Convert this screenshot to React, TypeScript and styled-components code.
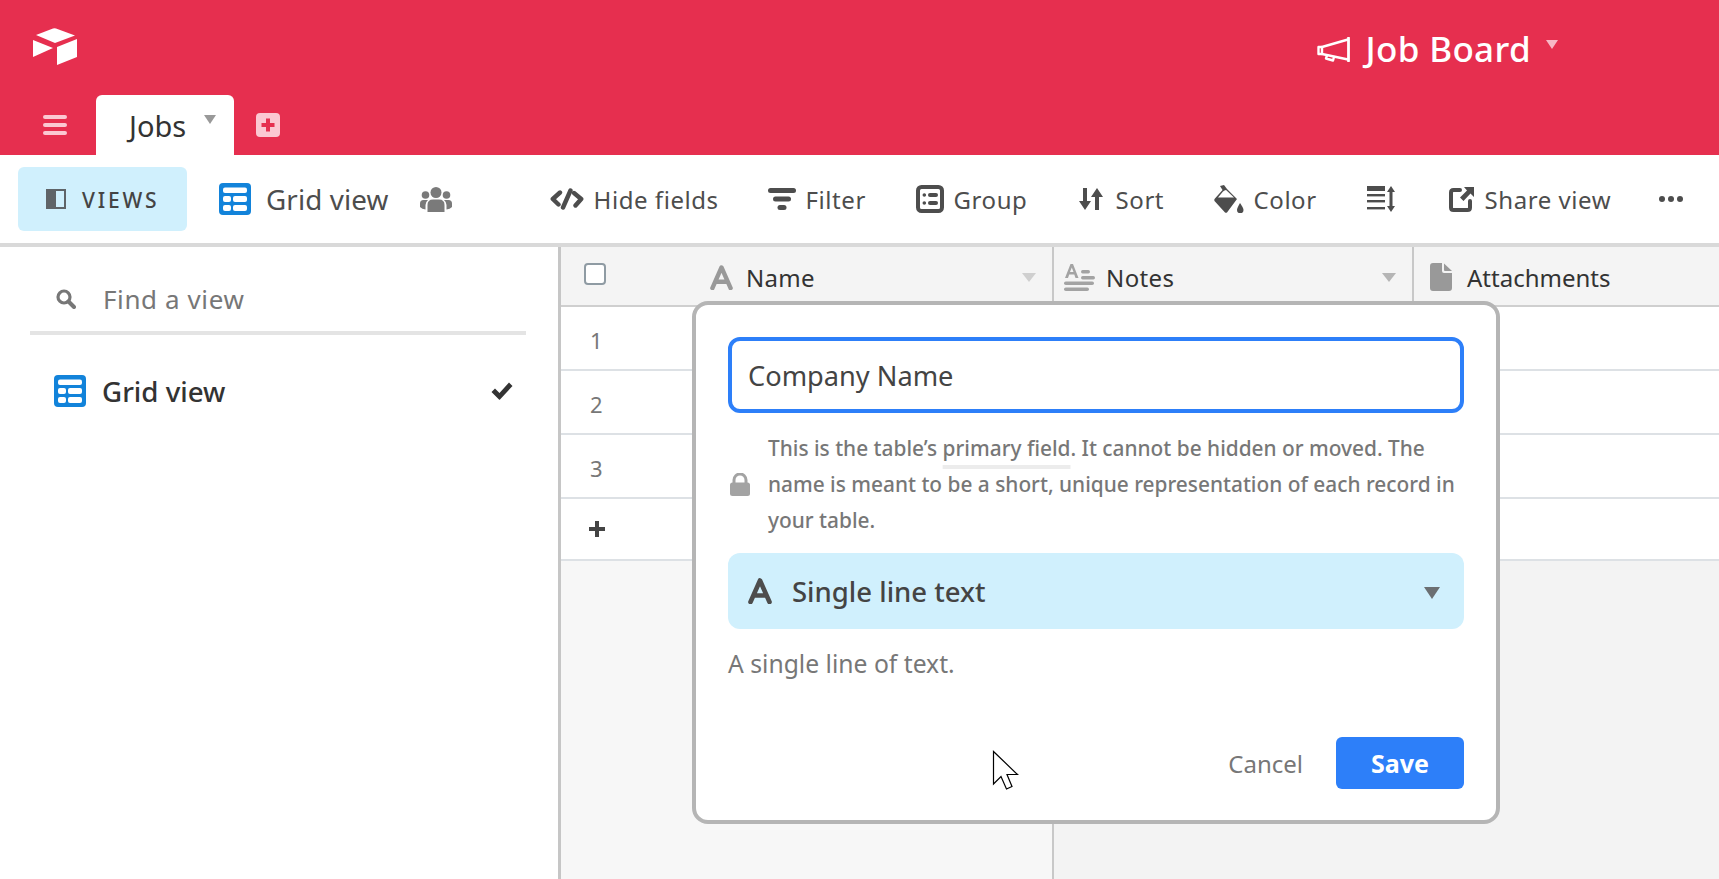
import React from "react";
import styled, { createGlobalStyle } from "styled-components";

const Global = createGlobalStyle`
  html, body { margin: 0; padding: 0; background: #fff; overflow: hidden; }
  * { box-sizing: border-box; }
  body { font-family: "Noto Sans", "Open Sans", Arial, sans-serif; }
`;

const Page = styled.div`
  position: relative;
  width: 1719px;
  height: 879px;
  display: flex;
  flex-direction: column;
  overflow: hidden;
`;
const Header = styled.header`
  height: 155px;
  flex: none;
  background: #e62f4f;
  display: flex;
  flex-direction: column;
`;
const TopRow = styled.div`
  height: 95px;
  display: flex;
  align-items: center;
  justify-content: space-between;
  padding: 0 161px 0 33px;
`;
const Logo = styled.svg`
  width: 44px;
  height: 37px;
  margin-top: -2px;
`;
const BaseTitle = styled.div`
  display: flex;
  align-items: center;
  color: #fff;
  margin-top: 3px;
`;
const BaseName = styled.span`
  font-size: 35px;
  font-weight: 500;
  line-height: 44px;
  margin: 0 15px;
  letter-spacing: 0.35px;
`;
const Caret = styled.span<{ $color: string; $w: number; $h: number }>`
  display: block;
  flex: none;
  width: 0;
  height: 0;
  border-left: ${(p) => p.$w / 2}px solid transparent;
  border-right: ${(p) => p.$w / 2}px solid transparent;
  border-top: ${(p) => p.$h}px solid ${(p) => p.$color};
`;
const BaseCaret = styled(Caret)`
  margin-top: -10px;
`;
const TabRow = styled.div`
  height: 60px;
  display: flex;
  align-items: flex-end;
  padding-left: 43px;
`;
const Burger = styled.svg`
  width: 24px;
  height: 20px;
  margin: 0 29px 20px 0;
`;
const Tab = styled.div`
  width: 138px;
  height: 60px;
  background: #fff;
  border-radius: 6px 6px 0 0;
  display: flex;
  align-items: center;
  padding: 2px 0 0 33px;
  color: #333;
  font-size: 29px;
  line-height: 40px;
`;
const TabCaret = styled(Caret)`
  margin: -13px 0 0 18px;
`;
const AddTab = styled.svg`
  width: 24px;
  height: 24px;
  margin: 0 0 18px 22px;
`;

const Toolbar = styled.div`
  height: 88px;
  flex: none;
  display: flex;
  align-items: center;
  padding-left: 18px;
  color: #4d4d4d;
  font-size: 24px;
  letter-spacing: 0.55px;
`;
const ViewsButton = styled.div`
  width: 169px;
  height: 64px;
  background: #d0f0fd;
  border-radius: 6px;
  display: flex;
  align-items: center;
  padding-left: 28px;
  margin-right: 32px;
  color: #444;
  font-size: 21px;
  letter-spacing: 2.8px;
  font-weight: 500;
`;
const ViewsLabel = styled.span`
  margin: 1px 0 0 16px;
`;
const ViewName = styled.div`
  width: 331px;
  display: flex;
  align-items: center;
  font-size: 27.8px;
  letter-spacing: 0.1px;
`;
const ViewNameText = styled.span`
  margin: 0 32px 0 15px;
`;
const ToolItem = styled.div<{ $w: number }>`
  width: ${(p) => p.$w}px;
  flex: none;
  display: flex;
  align-items: center;
  gap: 9.6px;
  white-space: nowrap;
`;
const Rule = styled.div`
  height: 4px;
  flex: none;
  background: #d9d9d9;
`;
const Main = styled.div`
  flex: 1;
  display: flex;
  min-height: 0;
`;
const Sidebar = styled.aside`
  width: 561px;
  flex: none;
  border-right: 3px solid #c6c6c6;
  padding: 30px 45px 0 30px;
`;
const SearchRow = styled.div`
  height: 58px;
  display: flex;
  align-items: center;
  gap: 27px;
  padding: 0 0 10px 26px;
  border-bottom: 4px solid #e4e4e4;
  width: 496px;
  color: #777;
  font-size: 26px;
  letter-spacing: 0.6px;
`;
const ViewItem = styled.div`
  margin-top: 40px;
  display: flex;
  align-items: center;
  padding-left: 24px;
  color: #333;
  font-size: 27.7px;
  font-weight: 500;
  height: 32px;
`;
const ViewItemName = styled.span`
  margin-left: 16px;
  flex: 1;
`;
const Grid = styled.section`
  flex: 1;
  min-width: 0;
  display: flex;
  flex-direction: column;
  background: #fff;
`;
const GridHeader = styled.div`
  height: 60px;
  flex: none;
  display: flex;
  background: #f4f4f4;
  border-bottom: 2px solid #cfcfcf;
  color: #333;
  font-size: 24px;
`;
const CheckCell = styled.div`
  width: 130px;
  display: flex;
  align-items: center;
  padding: 0 0 4px 23px;
  flex: none;
`;
const CheckBox = styled.span`
  width: 22px;
  height: 22px;
  border: 2px solid #8f9ba3;
  border-radius: 4px;
  background: #fff;
  display: block;
`;
const Column = styled.div<{ $w?: number; $left: number; $gap: number }>`
  ${(p) => (p.$w ? `width: ${p.$w}px; flex: none; border-right: 2px solid #c8c8c8;` : "flex: 1;")}
  display: flex;
  align-items: center;
  padding: 2px 16px 0 ${(p) => p.$left}px;
  gap: ${(p) => p.$gap}px;
`;
const ColumnName = styled.span<{ $spacing: number }>`
  flex: 1;
  letter-spacing: ${(p) => p.$spacing}px;
`;
const Row = styled.div<{ $h: number }>`
  height: ${(p) => p.$h}px;
  flex: none;
  display: flex;
  align-items: center;
  padding: 4px 0 0 29px;
  border-bottom: 2px solid #dde1e5;
  color: #777;
  font-size: 22px;
`;
const AddRowIcon = styled.svg`
  width: 16px;
  height: 16px;
  margin: -4px 0 0 -1px;
`;
const Filler = styled.div`
  flex: 1;
  display: flex;
`;
const FillerLeft = styled.div`
  width: 493px;
  flex: none;
  background: #f7f7f7;
  border-right: 2px solid #c8c8c8;
`;
const FillerRight = styled.div`
  flex: 1;
  background: #f3f3f3;
`;

const Popup = styled.div`
  position: absolute;
  left: 692px;
  top: 301px;
  width: 808px;
  height: 523px;
  background: #fff;
  border: 4px solid #b5b5b5;
  border-radius: 16px;
  padding: 32px 32px 31px;
  display: flex;
  flex-direction: column;
`;
const NameInput = styled.div`
  height: 76px;
  flex: none;
  border: 4px solid #2d7ff9;
  border-radius: 12px;
  display: flex;
  align-items: center;
  padding: 1px 0 0 16px;
  color: #444;
  font-size: 27.2px;
`;
const Notice = styled.div`
  margin-top: 17px;
  display: flex;
  align-items: center;
  gap: 18px;
  padding-left: 2px;
`;
const NoticeText = styled.p`
  margin: 0;
  width: 695px;
  color: #777;
  font-size: 20.85px;
  font-weight: 500;
  line-height: 36px;
  height: 108px;
`;
const Underlined = styled.span`
  text-decoration: underline 4px #ececec;
  text-underline-offset: 9px;
  text-decoration-skip-ink: none;
`;
const TypeSelect = styled.div`
  margin-top: 15px;
  height: 76px;
  flex: none;
  background: #d0f0fd;
  border-radius: 12px;
  display: flex;
  align-items: center;
  padding: 0 24px 0 20px;
  color: #444;
  font-size: 27.5px;
  font-weight: 500;
`;
const TypeName = styled.span`
  flex: 1;
  margin-left: 20px;
`;
const TypeCaret = styled(Caret)`
  margin-top: 4px;
`;
const Help = styled.p`
  margin: 17px 0 0;
  color: #777;
  font-size: 24.7px;
  line-height: 36px;
`;
const Footer = styled.div`
  margin-top: auto;
  display: flex;
  justify-content: flex-end;
  align-items: center;
`;
const CancelButton = styled.span`
  color: #777;
  font-size: 24px;
  margin-right: 33px;
`;
const SaveButton = styled.span`
  width: 128px;
  height: 52px;
  background: #2d7ff9;
  border-radius: 6px;
  color: #fff;
  font-size: 25px;
  font-weight: 700;
  display: flex;
  align-items: center;
  justify-content: center;
`;
const Cursor = styled.svg`
  position: absolute;
  left: 992px;
  top: 750px;
  width: 27px;
  height: 41px;
`;

const GridIcon = ({ size = 32 }: { size?: number }) => (
  <svg width={size} height={size} viewBox="0 0 32 32">
    <rect width="32" height="32" rx="4" fill="#1283da" />
    <g fill="#fff">
      <rect x="4" y="4.5" width="24" height="5.5" rx="2" />
      <rect x="4" y="13" width="8" height="6" rx="2" />
      <rect x="14" y="13" width="14" height="6" rx="2" />
      <rect x="4" y="22" width="8" height="6" rx="2" />
      <rect x="14" y="22" width="14" height="6" rx="2" />
    </g>
  </svg>
);

const AIcon = ({ color, w, h }: { color: string; w: number; h: number }) => (
  <svg width={w} height={h} viewBox="0 0 24 26" style={{ flex: "none" }}>
    <path d="M2.5 24 L12 2.5 L21.5 24 M6.5 17.5 H17.5" fill="none" stroke={color} strokeWidth="4.6" strokeLinecap="round" strokeLinejoin="round" />
  </svg>
);

export default function App() {
  return (
    <Page>
      <Global />
      <Header>
        <TopRow>
          <Logo viewBox="0 0 44 37">
            <g fill="#fff">
              <path d="M3 7 L20 0.5 Q21.5 0 23 0.5 L42 7.5 L22 15 Z" />
              <path d="M0 12 L20 20 L0 29 Z" />
              <path d="M24 19 L44 11 V29 L24 37 Z" />
            </g>
          </Logo>
          <BaseTitle>
            <svg width="33" height="25" viewBox="0 0 33 25" fill="none" stroke="#fff" strokeWidth="2.4" strokeLinejoin="round">
              <path d="M31.5 1 V24" strokeWidth="2.8" strokeLinecap="round" />
              <path d="M31 2.5 L5 10 V17 L31 22.5" />
              <path d="M5 10 H1.5 V17 H5" />
              <path d="M10 18.5 L9 21.5 L16 23.5 L17 20" />
            </svg>
            <BaseName>Job Board</BaseName>
            <BaseCaret $color="#f7b8c5" $w={13} $h={9} />
          </BaseTitle>
        </TopRow>
        <TabRow>
          <Burger viewBox="0 0 24 20">
            <g fill="#fbc8d2">
              <rect y="0" width="24" height="4" rx="2" />
              <rect y="8" width="24" height="4" rx="2" />
              <rect y="16" width="24" height="4" rx="2" />
            </g>
          </Burger>
          <Tab>
            Jobs
            <TabCaret $color="#999" $w={13} $h={9} />
          </Tab>
          <AddTab viewBox="0 0 24 24">
            <rect width="24" height="24" rx="4" fill="#fbc8d2" />
            <path d="M12 5.5 V18.5 M5.5 12 H18.5" stroke="#e62f4f" strokeWidth="4" />
          </AddTab>
        </TabRow>
      </Header>

      <Toolbar>
        <ViewsButton>
          <svg width="20" height="20" viewBox="0 0 20 20">
            <rect x="0" y="0" width="20" height="20" fill="#5f6468" />
            <rect x="10" y="2" width="8" height="16" fill="#d0f0fd" />
          </svg>
          <ViewsLabel>VIEWS</ViewsLabel>
        </ViewsButton>
        <ViewName>
          <GridIcon />
          <ViewNameText>Grid view</ViewNameText>
          <svg width="32" height="25" viewBox="0 0 32 25" fill="#7a7a7a">
            <circle cx="16" cy="5.5" r="5.5" />
            <circle cx="5.5" cy="8" r="3.8" />
            <circle cx="26.5" cy="8" r="3.8" />
            <path d="M7.5 25 V18 Q7.5 12.5 13 12.5 H19 Q24.5 12.5 24.5 18 V25 Q16 26 7.5 25 Z" />
            <path d="M0 20 V16.5 Q0 13 3.5 13 H8 Q5.5 15 5.5 18 V22.5 Q2 22 0 20 Z" />
            <path d="M32 20 V16.5 Q32 13 28.5 13 H24 Q26.5 15 26.5 18 V22.5 Q30 22 32 20 Z" />
          </svg>
        </ViewName>
        <ToolItem $w={218}>
          <svg width="34" height="22" viewBox="0 0 34 22" fill="none" stroke="#4d4d4d" strokeWidth="4.4" strokeLinecap="round" strokeLinejoin="round">
            <path d="M10 4.5 L2.8 11 L8.5 16.5" />
            <path d="M24 5 L31.2 11 L25.5 17.5" />
            <path d="M20.5 2.5 L13 19.5" />
          </svg>
          Hide fields
        </ToolItem>
        <ToolItem $w={148}>
          <svg width="28" height="22" viewBox="0 0 28 22" fill="#4d4d4d">
            <rect width="28" height="5" rx="2.5" />
            <rect x="5" y="8.5" width="18" height="5" rx="2.5" />
            <rect x="9.5" y="17" width="9" height="5" rx="2.5" />
          </svg>
          Filter
        </ToolItem>
        <ToolItem $w={163}>
          <svg width="28" height="28" viewBox="0 0 28 28" fill="none">
            <rect x="2" y="2" width="24" height="24" rx="3.5" stroke="#4d4d4d" strokeWidth="4" />
            <g fill="#4d4d4d">
              <circle cx="8.3" cy="10" r="1.8" />
              <circle cx="8.3" cy="18" r="1.8" />
              <rect x="12" y="8" width="10" height="4" rx="2" />
              <rect x="12" y="16" width="10" height="4" rx="2" />
            </g>
          </svg>
          Group
        </ToolItem>
        <ToolItem $w={135}>
          <svg width="24" height="24" viewBox="0 0 24 24" fill="#4d4d4d" style={{ marginRight: 3 }}>
            <path d="M4 1 H8 V14 H12 L6 23 L0 14 H4 Z" />
            <path d="M16 23 H20 V10 H24 L18 1 L12 10 H16 Z" />
          </svg>
          Sort
        </ToolItem>
        <ToolItem $w={153}>
          <svg width="30" height="28" viewBox="0 0 30 28" fill="#4d4d4d">
            <path d="M6 1 L10 0 L13 4 L23 14 L13 27.5 Q12 28 11 27.5 L0.5 16 Q0 15 0.5 14 L8.5 5 Z M9 6.5 L4 12.5 H20 L12 5 L10.5 5.5 Z" fillRule="evenodd" />
            <path d="M26 18 Q29.5 23 29.5 25 A3 3 0 0 1 23 25 Q23 23 26 18 Z" />
          </svg>
          Color
        </ToolItem>
        <ToolItem $w={82}>
          <svg width="28" height="26" viewBox="0 0 28 26" fill="#4d4d4d">
            <rect y="0" width="18" height="5" />
            <rect y="8" width="18" height="2.4" />
            <rect y="14" width="18" height="2.4" />
            <rect y="21" width="18" height="2.4" />
            <path d="M24 0 L28 6 H25.5 V20 H28 L24 26 L20 20 H22.5 V6 H20 Z" />
          </svg>
        </ToolItem>
        <ToolItem $w={210}>
          <svg width="26" height="26" viewBox="0 0 26 26" fill="none">
            <path d="M11 4 H4.5 Q2 4 2 6.5 V21.5 Q2 24 4.5 24 H18.5 Q21 24 21 21.5 V15" stroke="#4d4d4d" strokeWidth="4" strokeLinecap="round" />
            <path d="M15 1 H25 V11 L21.5 7.5 L14.5 15 L11 11.5 L18 4.5 Z" fill="#4d4d4d" />
          </svg>
          Share view
        </ToolItem>
        <ToolItem $w={24}>
          <svg width="24" height="8" viewBox="0 0 24 8" fill="#4d4d4d">
            <circle cx="3" cy="4" r="3" />
            <circle cx="12" cy="4" r="3" />
            <circle cx="21" cy="4" r="3" />
          </svg>
        </ToolItem>
      </Toolbar>
      <Rule />

      <Main>
        <Sidebar>
          <SearchRow>
            <svg width="20" height="20" viewBox="0 0 20 20" fill="none" stroke="#777">
              <circle cx="8" cy="8" r="6" strokeWidth="3.2" />
              <path d="M12.5 12.5 L18 18" strokeWidth="4" strokeLinecap="round" />
            </svg>
            Find a view
          </SearchRow>
          <ViewItem>
            <GridIcon />
            <ViewItemName>Grid view</ViewItemName>
            <svg width="22" height="18" viewBox="0 0 22 18" fill="#333">
              <path d="M0.5 10 L4 6.5 L8.5 11 L18 0.5 L21.5 4 L9 17.5 Q8.5 18 8 17.5 Z" />
            </svg>
          </ViewItem>
        </Sidebar>
        <Grid>
          <GridHeader>
            <CheckCell>
              <CheckBox />
            </CheckCell>
            <Column $w={363} $left={19} $gap={13}>
              <AIcon color="#999" w={23} h={25} />
              <ColumnName $spacing={0.3}>Name</ColumnName>
              <Caret $color="#cfcfcf" $w={14} $h={9} />
            </Column>
            <Column $w={360} $left={10} $gap={11}>
              <svg width="31" height="27" viewBox="0 0 31 27" fill="#a3a3a3" style={{ flex: "none" }}>
                <path d="M1 14 L6.5 0 H9 L14.5 14 H11.5 L10.3 10.5 H5.2 L4 14 Z M6 8 H9.5 L7.8 3.5 Z" fillRule="evenodd" />
                <rect x="17" y="6" width="9" height="3.4" rx="1.7" />
                <rect x="17" y="12" width="14" height="3.4" rx="1.7" />
                <rect x="0" y="17.5" width="30" height="3.6" rx="1.8" />
                <rect x="0" y="23.4" width="25" height="3.6" rx="1.8" />
              </svg>
              <ColumnName $spacing={0.4}>Notes</ColumnName>
              <Caret $color="#b5b5b5" $w={14} $h={9} />
            </Column>
            <Column $left={16} $gap={15}>
              <svg width="22" height="28" viewBox="0 0 22 28" fill="#999" style={{ flex: "none" }}>
                <path d="M3 0 H12 V8 Q12 10 14 10 H22 V25 Q22 28 19 28 H3 Q0 28 0 25 V3 Q0 0 3 0 Z" />
                <path d="M14 0.5 L22 8 H15 Q14 8 14 7 Z" />
              </svg>
              <ColumnName $spacing={0}>Attachments</ColumnName>
            </Column>
          </GridHeader>
          <Row $h={64}>1</Row>
          <Row $h={64}>2</Row>
          <Row $h={64}>3</Row>
          <Row $h={62}>
            <AddRowIcon viewBox="0 0 16 16" fill="#444">
              <path d="M6 0 H10 V6 H16 V10 H10 V16 H6 V10 H0 V6 H6 Z" />
            </AddRowIcon>
          </Row>
          <Filler>
            <FillerLeft />
            <FillerRight />
          </Filler>
        </Grid>
      </Main>

      <Popup>
        <NameInput>Company Name</NameInput>
        <Notice>
          <svg width="20" height="23" viewBox="0 0 20 23" fill="#a3a3a3" style={{ flex: "none" }}>
            <path d="M4 11 V7 A6 6 0 0 1 16 7 V11" fill="none" stroke="#a3a3a3" strokeWidth="3" />
            <rect y="9.5" width="20" height="13.5" rx="2.5" />
          </svg>
          <NoticeText>
            This is the table’s <Underlined>primary field</Underlined>. It cannot be hidden or moved. The name is meant to be a short, unique representation of each record in your table.
          </NoticeText>
        </Notice>
        <TypeSelect>
          <AIcon color="#4d4d4d" w={24} h={26} />
          <TypeName>Single line text</TypeName>
          <TypeCaret $color="#6b6f72" $w={16} $h={12} />
        </TypeSelect>
        <Help>A single line of text.</Help>
        <Footer>
          <CancelButton>Cancel</CancelButton>
          <SaveButton>Save</SaveButton>
        </Footer>
      </Popup>

      <Cursor viewBox="0 0 27 41">
        <path d="M1.5 1.5 V34 L9 26.5 L14.5 39 L20 36.5 L15 24.5 H25.5 Z" fill="#fff" stroke="#000" strokeWidth="1.2" />
      </Cursor>
    </Page>
  );
}
